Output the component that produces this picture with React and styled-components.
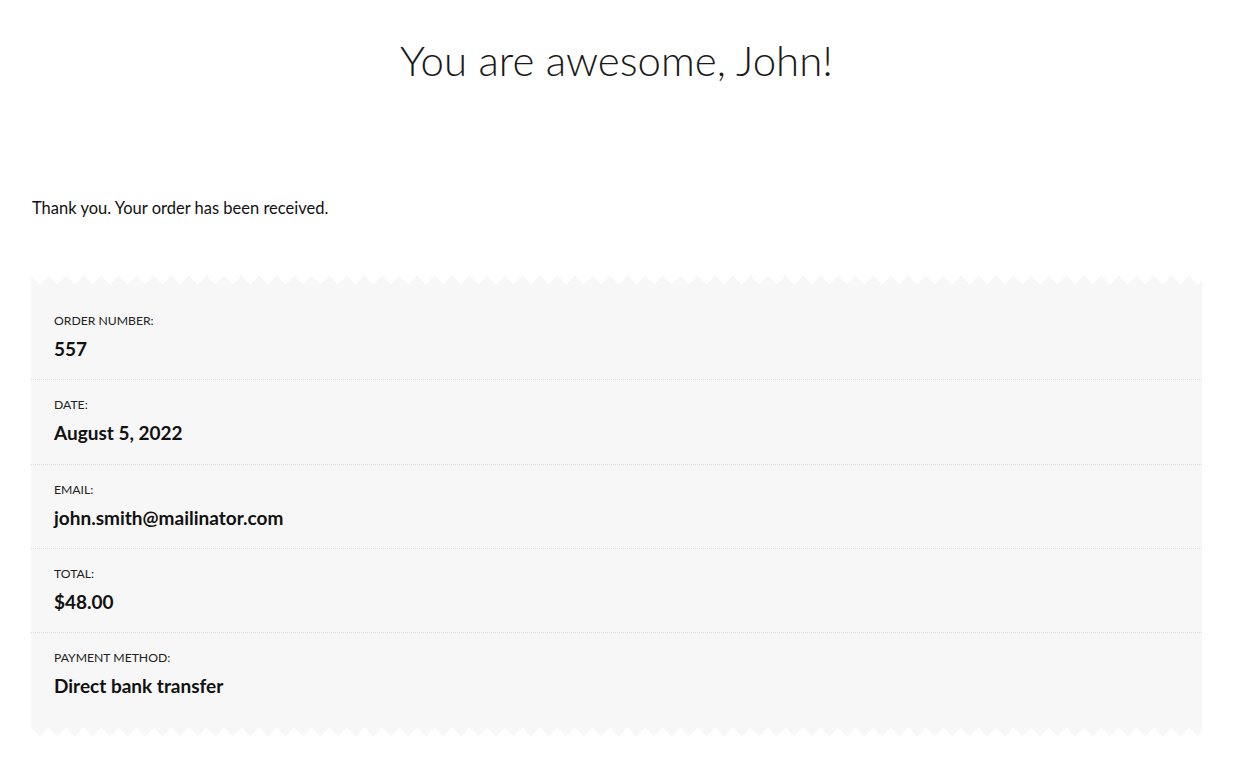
import React from "react";
import styled, { createGlobalStyle } from "styled-components";

const Global = createGlobalStyle`
  html, body { margin: 0; padding: 0; background: #fff; }
  body { font-family: "Lato", "Noto Sans", sans-serif; color: #111; }
`;

const Page = styled.div`
  padding: 0 39px 0 31px;
`;

const Title = styled.h1`
  margin: 0;
  padding-top: 30px;
  text-align: center;
  font-weight: 300;
  font-size: 42px;
  line-height: 60px;
  color: #1a1a1a;
`;

const Note = styled.p`
  margin: 106px 0 0 1px;
  font-size: 16.5px;
  line-height: 24px;
`;

const Receipt = styled.div`
  margin-top: 56px;
  display: flex;
  flex-direction: column;
`;

const Edge = styled.div`
  height: 9px;
  background-image: ${(p) =>
    p.$bottom
      ? "conic-gradient(from -45deg at 50% 100%, #f7f7f7 90deg, transparent 0deg)"
      : "conic-gradient(from 135deg at 50% 0%, #f7f7f7 90deg, transparent 0deg)"};
  background-repeat: repeat-x;
  background-size: 17.56px 9px;
  background-position: ${(p) => (p.$bottom ? "0 0" : "-8.78px 0")};
`;

const Body = styled.ul`
  margin: 0;
  padding: 11px 0 11px;
  list-style: none;
  background: #f7f7f7;
`;

const Row = styled.li`
  padding: 16px 23px 18.3px;
  border-top: 1px dotted #dcdcdc;
  &:first-child { border-top: none; }
  display: flex;
  flex-direction: column;
  gap: 7px;
`;

const Label = styled.span`
  font-size: 12.2px;
  line-height: 18px;
  text-transform: uppercase;
  color: #222;
`;

const Value = styled.strong`
  font-size: 19px;
  line-height: 24px;
  font-weight: 700;
  color: #111;
`;

const items = [
  ["Order number:", "557"],
  ["Date:", "August 5, 2022"],
  ["Email:", "john.smith@mailinator.com"],
  ["Total:", "$48.00"],
  ["Payment method:", "Direct bank transfer"],
];

export default function App() {
  return (
    <>
      <Global />
      <Page>
        <Title>You are awesome, John!</Title>
        <Note>Thank you. Your order has been received.</Note>
        <Receipt>
          <Edge />
          <Body>
            {items.map(([l, v]) => (
              <Row key={l}>
                <Label>{l}</Label>
                <Value>{v}</Value>
              </Row>
            ))}
          </Body>
          <Edge $bottom />
        </Receipt>
      </Page>
    </>
  );
}
